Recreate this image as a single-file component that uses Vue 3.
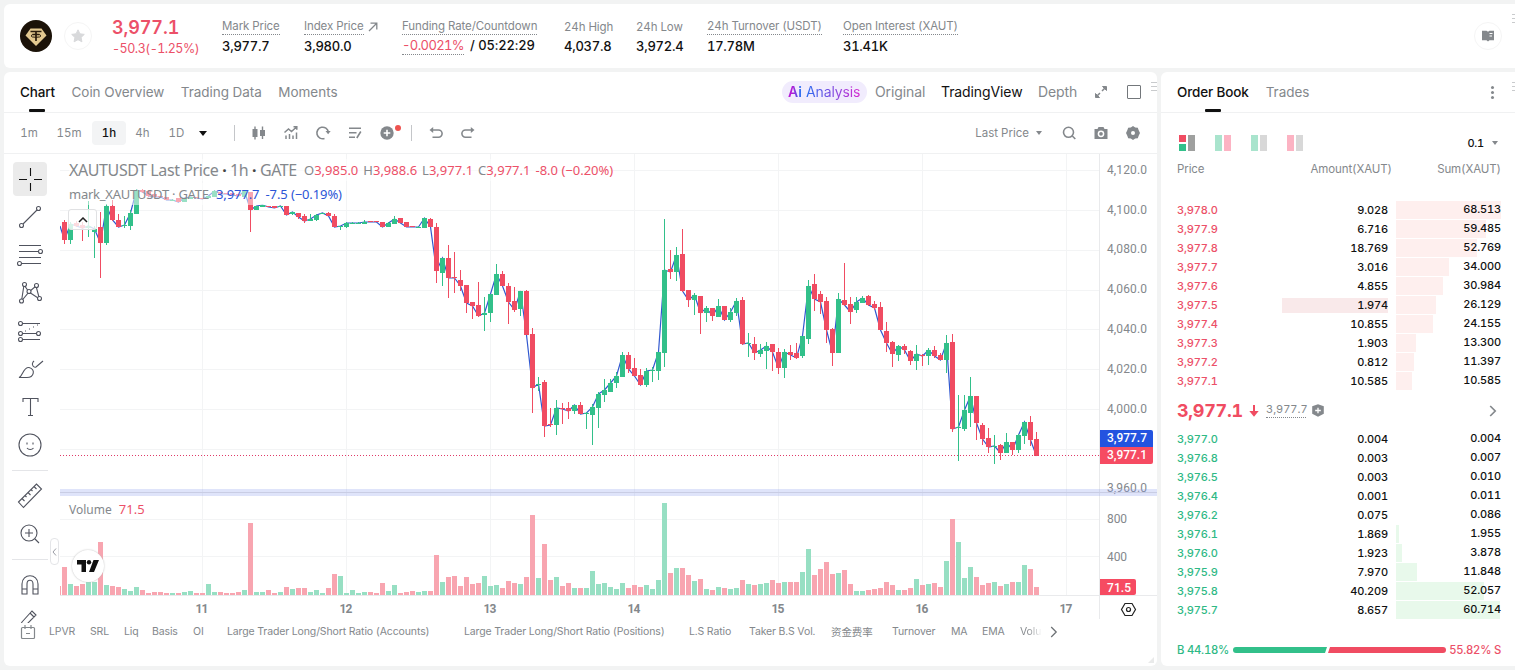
<template>
  <div class="page">
    <header class="ticker">
      <svg class="coin" viewBox="0 0 32 32">
        <circle cx="16" cy="16" r="16" fill="#1b1208" />
        <path d="M10.5 8.5h11l5 7L16 26 5.500 15.500z" fill="#e3c88f" />
        <path d="M10.500 11.500h11M16 11.500v9.500M12.500 14.500h7" stroke="#2a1c0c" stroke-width="1.700" fill="none" />
        <ellipse cx="16" cy="15.800" rx="5" ry="1.500" stroke="#2a1c0c" stroke-width="1" fill="none" />
      </svg>
      <div class="star">
        <svg width="14" height="14" viewBox="0 0 14 14">
          <path d="M7 .8l1.900 4 4.400.600-3.200 3 .8 4.400L7 10.700l-3.900 2.100.8-4.400-3.200-3 4.400-.600z" fill="#d8d9db" stroke="#d8d9db" stroke-linejoin="round" />
        </svg>
      </div>
      <div class="last">
        <div class="last-price">3,977.1</div>
        <div class="last-change">-50.3(-1.25%)</div>
      </div>
      <div class="stats">
        <div v-for="s in stats" :key="s.label" class="stat">
          <div class="stat-label">
            <span :class="{ dotted: s.dotted }">{{ s.label }}</span>
            <svg v-if="s.link" class="link" width="10" height="10" viewBox="0 0 10 10">
              <path d="M1 9L8.500 1.500M2.500 1.200h6.300v6.300" fill="none" stroke="#84888c" stroke-width="1.300" />
            </svg>
          </div>
          <div v-if="s.rate" class="stat-value funding">
            <span class="rate">{{ s.rate }}</span><span>{{ s.value }}</span>
          </div>
          <div v-else class="stat-value">{{ s.value }}</div>
        </div>
      </div>
      <div class="guide">
        <svg width="14" height="12" viewBox="0 0 14 12">
          <path d="M1 .8h4.500L7 1.800 8.500.8H13v9.500H8.500L7 11.600l-1.500-1.300H1z" fill="#84888c" />
          <path d="M8.500 3.500h3M8.500 6H11" stroke="#fff" stroke-width="1" />
        </svg>
      </div>
      <i class="grip grip-top" />
    </header>

    <main class="main">
      <section class="card chart-card">
        <nav class="tabs">
          <div class="tabs-left">
            <span class="tab on">Chart</span>
            <span class="tab">Coin Overview</span>
            <span class="tab">Trading Data</span>
            <span class="tab">Moments</span>
          </div>
          <div class="tabs-right">
            <span class="ai"><b>Ai</b><em>Analysis</em></span>
            <span class="tab original">Original</span>
            <span class="tab dark tv">TradingView</span>
            <span class="tab depth">Depth</span>
            <svg class="expand" width="14" height="14" viewBox="0 0 14 14">
              <path d="M8.500 1.500h4v4zM1.500 8.500v4h4z" fill="#84888c" stroke="#84888c" />
              <path d="M11.500 2.500L8 6M2.500 11.500L6 8" stroke="#84888c" stroke-width="1.500" />
            </svg>
            <i class="square" />
          </div>
          <i class="grip" />
        </nav>

        <div class="toolbar">
          <div class="tools">
            <span>1m</span>
            <span>15m</span>
            <span class="picked">1h</span>
            <span>4h</span>
            <span>1D</span>
            <span><i class="caret black" /></span>
            <span class="bar first"><i /></span>
            <span>
              <svg width="16" height="16" viewBox="0 0 16 16" fill="#84888c">
                <path d="M1.500 4h5v8h-5zM3.300 1.500h1.400v13H3.300zM9 5h5v6H9zM10.800 1.500h1.400v12.500h-1.400z" />
              </svg>
            </span>
            <span>
              <svg width="16" height="16" viewBox="0 0 16 16" fill="none" stroke="#84888c" stroke-width="1.500">
                <path d="M1.500 7.500L5.500 4l3 2.500L13.500 2M10.500 1.800h3.300v3M3 14v-3.500M6.500 14V9M10 14v-3.500M13.500 14V7.500" />
              </svg>
            </span>
            <span>
              <svg width="16" height="16" viewBox="0 0 16 16" fill="none" stroke="#84888c" stroke-width="1.600">
                <path d="M9.500 13.500A5.800 5.800 0 1 1 13.400 7" />
                <path d="M10.500 6h5.200l-2.600 3.200z" fill="#84888c" stroke="none" />
              </svg>
            </span>
            <span>
              <svg width="16" height="16" viewBox="0 0 16 16" fill="none" stroke="#84888c" stroke-width="1.600">
                <path d="M2 3.200h12M2 7.700h7.500M2 12.200h6M13.800 6.500L9.800 13" />
              </svg>
            </span>
            <span class="plus">
              <svg width="16" height="16" viewBox="0 0 16 16">
                <circle cx="8" cy="8" r="6.700" fill="#84888c" />
                <path d="M8 4.700v6.600M4.700 8h6.600" stroke="#fff" stroke-width="1.600" />
              </svg>
              <i class="dot" />
            </span>
            <span class="bar"><i /></span>
            <span>
              <svg width="16" height="16" viewBox="0 0 16 16" fill="none" stroke="#84888c" stroke-width="1.600">
                <path d="M4.500 5h6a3.200 3.200 0 0 1 0 7.200H4.500" />
                <path d="M1.500 5l3.700-3v6z" fill="#84888c" stroke="none" />
              </svg>
            </span>
            <span>
              <svg width="16" height="16" viewBox="0 0 16 16" fill="none" stroke="#84888c" stroke-width="1.600">
                <path d="M11.500 5h-6a3.200 3.200 0 0 0 0 7.200h6" />
                <path d="M14.500 5l-3.700-3v6z" fill="#84888c" stroke="none" />
              </svg>
            </span>
          </div>
          <div class="tools-right">
            <span class="source">Last Price</span>
            <i class="caret" />
            <svg width="16" height="16" viewBox="0 0 16 16" fill="none" stroke="#84888c" stroke-width="1.600">
              <circle cx="7.500" cy="7.300" r="5" /><path d="M11.300 11l3 3" />
            </svg>
            <svg width="16" height="16" viewBox="0 0 16 16">
              <path d="M1.500 4h3l1-2h5l1 2h3v10h-13z" fill="#84888c" />
              <circle cx="8" cy="8.800" r="2.600" fill="#84888c" stroke="#fff" stroke-width="1.500" />
            </svg>
            <svg width="16" height="16" viewBox="0 0 16 16">
              <path d="M8 1l2.200 1.500 2.600.2.900 2.500L15 8l-1.300 2.800-.9 2.500-2.600.2L8 15l-2.200-1.500-2.600-.2-.9-2.500L1 8l1.300-2.800.9-2.500 2.600-.2z" fill="#84888c" />
              <circle cx="8" cy="8" r="2" fill="#fff" />
            </svg>
          </div>
        </div>

        <div class="workspace">
          <aside class="draw">
            <span v-for="(d, i) in drawTools" :key="i" class="draw-tool" :class="{ selected: i === 0, rule: d.rule }">
              <svg width="34" height="34" viewBox="-17 -17 34 34" fill="none" :stroke="i === 0 ? '#111' : '#50535e'" stroke-width="1.100">
                <path :d="d.path" />
                <circle v-for="(c, n) in d.dots" :key="n" :cx="c[0]" :cy="c[1]" r="2" fill="#fff" />
              </svg>
            </span>
          </aside>

          <div class="plot">
            <svg class="chart" width="1097" height="469" viewBox="60 154 1097 469">
              <g stroke="#f3f4f5">
                <line v-for="y in gridY" :key="y" x1="60" x2="1099" :y1="y" :y2="y" />
                <line v-for="d in days" :key="d.x" :x1="d.x" :x2="d.x" y1="154" y2="595" />
              </g>
              <polyline :points="markLine" fill="none" stroke="#3158cf" stroke-width="1.200" />
              <g v-for="(c, i) in bars" :key="i" :fill="c.up ? '#32c08a' : '#f04c62'">
                <rect :x="c.x + 2" :y="c.high" width="1" :height="c.low - c.high" />
                <rect :x="c.x" :y="c.top" width="5" :height="Math.max(1, c.bottom - c.top)" />
                <rect :x="c.x" :y="595 - c.volume" width="5" :height="c.volume" :fill="c.up ? '#97dfc3' : '#f8a5b0'" />
              </g>
              <rect x="60" y="586" width="1" height="9" fill="#f8a5b0" />
              <line x1="60" x2="1099" y1="455.500" y2="455.500" stroke="#e03a68" stroke-dasharray="1 2" />
              <path d="M1099.500 154v465M60 595.500h1097" stroke="#e9eaec" />
              <g class="axis">
                <text v-for="p in prices" :key="p.y" x="1107" :y="p.y" :textLength="p.w">{{ p.text }}</text>
              </g>
              <rect x="60" y="489" width="1097" height="7" fill="#8c9eec" opacity=".28" />
              <line x1="60" x2="1157" y1="492.500" y2="492.500" stroke="#c9cde4" />
              <g class="axis flags">
                <path d="M1100 430h51a2 2 0 0 1 2 2v15h-53z" fill="#2353e0" />
                <path d="M1100 447h53v15a2 2 0 0 1-2 2h-51z" fill="#f64b62" />
                <path d="M1100 579h34a2 2 0 0 1 2 2v12a2 2 0 0 1-2 2h-34z" fill="#f64b62" />
                <text x="1107" y="442" textLength="40">3,977.7</text>
                <text x="1107" y="459.300" textLength="40">3,977.1</text>
                <text x="1107" y="592" textLength="24">71.5</text>
              </g>
              <g class="axis dates">
                <text v-for="d in days" :key="d.x" :x="d.x - 0.5" y="613" textLength="13">{{ d.text }}</text>
              </g>
              <path d="M1125 603.500h7l3.500 6-3.500 6h-7l-3.500-6z" fill="none" stroke="#222" stroke-width="1.200" />
              <circle cx="1128.500" cy="609.500" r="2" fill="none" stroke="#222" stroke-width="1.200" />
            </svg>

            <div class="legend">
              <div class="legend-title">
                <span class="pair">XAUTUSDT Last Price <b>·</b> 1h <b>·</b> GATE</span>
                <span class="ohlc"><span>O<em>3,985.0</em></span><span>H<em>3,988.6</em></span><span>L<em>3,977.1</em></span><span>C<em>3,977.1</em></span><em>-8.0 (−0.20%)</em></span>
              </div>
              <div class="legend-mark">
                <span class="mark">mark_XAUTUSDT · GATE</span>
                <span class="blue">3,977.7</span><span class="blue">-7.5 (−0.19%)</span>
              </div>
            </div>
            <div class="fold">
              <svg width="10" height="6" viewBox="0 0 10 6"><path d="M1 5l4-4 4 4" fill="none" stroke="#222" stroke-width="1.500" /></svg>
            </div>
            <div class="volume-legend">Volume <em>71.5</em></div>
            <div class="tv-logo">
              <svg width="22" height="12" viewBox="0 0 22 12" fill="#111">
                <path d="M0 0h9v12H4.500V4.500H0zM16.500 0H22l-5 12h-5z" /><circle cx="12" cy="2.300" r="2.200" />
              </svg>
            </div>
            <div class="collapse">
              <svg width="5" height="8" viewBox="0 0 5 8"><path d="M4 .5L1 4l3 3.500" fill="none" stroke="#9a9da5" /></svg>
            </div>
          </div>
        </div>

        <div class="indicators">
          <svg class="calendar" width="16" height="16" viewBox="0 0 16 16" fill="none" stroke="#84888c" stroke-width="1.200">
            <rect x="1.500" y="3.500" width="13" height="11" rx="1" /><path d="M5 1v4M11 1v4M6 9.500h4" />
          </svg>
          <span v-for="n in indicators" :key="n">{{ n }}</span>
          <span class="fade">Volu</span>
          <svg class="more" width="8" height="12" viewBox="0 0 8 12"><path d="M1.200 1l5 5-5 5" fill="none" stroke="#6f7377" stroke-width="1.300" /></svg>
        </div>
        <i class="resize" />
      </section>

      <section class="card book-card">
        <nav class="tabs">
          <div class="tabs-left">
            <span class="tab on">Order Book</span>
            <span class="tab trades">Trades</span>
          </div>
          <div class="kebab"><i /><i /><i /></div>
          <i class="grip" />
        </nav>

        <div class="modes">
          <span class="mode active"><i class="two" /><i class="gray" /></span>
          <span class="mode"><i class="green" /><i class="red" /></span>
          <span class="mode"><i class="green" /><i class="gray" /></span>
          <span class="mode"><i class="red" /><i class="gray" /></span>
          <span class="step">0.1</span>
          <i class="caret" />
        </div>

        <div class="book-head">
          <span>Price</span><span>Amount(XAUT)</span><span>Sum(XAUT)</span>
        </div>

        <div class="rows asks">
          <div v-for="r in asks" :key="r[0]" class="row">
            <span class="price">{{ r[0] }}</span>
            <span class="amount"><u :class="{ flash: r[0] === '3,977.5' }">{{ r[1] }}</u></span>
            <span class="sum"><i :style="{ width: r[3] + 'px' }" /><u>{{ r[2] }}</u></span>
          </div>
        </div>

        <div class="mid">
          <span class="mid-price">3,977.1</span>
          <svg width="10" height="12" viewBox="0 0 10 12"><path d="M5 0v8" stroke="#f04c62" stroke-width="2" /><path d="M.3 6h9.400L5 11.700z" fill="#f04c62" /></svg>
          <span class="mid-mark">3,977.7</span>
          <svg class="shield" width="12" height="13" viewBox="0 0 12 13"><path d="M6 .3l5.800 2v7.500L6 12.700.200 9.800V2.300z" fill="#84888c" /><path d="M6 3.700v5.600M3.200 6.500h5.600" stroke="#fff" stroke-width="1.300" /></svg>
          <svg class="go" width="8" height="12" viewBox="0 0 8 12"><path d="M1.200 1l5 5-5 5" fill="none" stroke="#84888c" stroke-width="1.700" /></svg>
        </div>

        <div class="rows bids">
          <div v-for="r in bids" :key="r[0]" class="row">
            <span class="price">{{ r[0] }}</span>
            <span class="amount"><u>{{ r[1] }}</u></span>
            <span class="sum"><i :style="{ width: r[3] + 'px' }" /><u>{{ r[2] }}</u></span>
          </div>
        </div>

        <div class="ratio">
          <span class="buy">B 44.18%</span>
          <i class="buy-bar" /><i class="sell-bar" />
          <span class="sell">55.82% S</span>
        </div>
      </section>
    </main>
  </div>
</template>

<script setup>
import { computed } from 'vue'

const stats = [
  { label: 'Mark Price', value: '3,977.7', dotted: true },
  { label: 'Index Price', value: '3,980.0', dotted: true, link: true },
  { label: 'Funding Rate/Countdown', rate: '-0.0021%', value: '/ 05:22:29', dotted: true },
  { label: '24h High', value: '4,037.8' },
  { label: '24h Low', value: '3,972.4' },
  { label: '24h Turnover (USDT)', value: '17.78M', dotted: true },
  { label: 'Open Interest (XAUT)', value: '31.41K', dotted: true }
]

const drawTools = [
  { path: 'M.5-11v8M.5 4v8M-11 .5h8M4 .5h8' },
  { path: 'M-7 7L7-7', dots: [[-8.500, 8.500], [8.500, -8.500]] },
  { path: 'M-11-9.500h22M-11-3.500H9M-11 2.500h22M-9 8.500h20', dots: [[10.500, -3.500], [-10.500, 8.500]] },
  { path: 'M-8.500 8L-6-8L-1-1L6-7L9.500 6L-1-1L-8.500 8', dots: [[-8.500, 8], [-5.500, -8.500], [-1, -1.500], [6.500, -7.500], [9.500, 5.500]] },
  { path: 'M-8-7.500H10M-8 2.500H7M-8 8.500H10M-5 0h1M-1-2h1M3-4h1M7-6h1', dots: [[-9.500, -7.500], [-9.500, 2.500], [8.500, 2.500], [-9.500, 8.500]] },
  { path: 'M-11 8.500C-7 7-7-2-1-1.500C6 0 4 8.500-3 8.500zM13-8L6-2C4-1 1-4 3-7l1-1' },
  { path: 'M-7-5v-3.500H8V-5M.5-8.500v17M-2 8.500h5' },
  { path: 'M11 0A11 11 0 1 1-11 0A11 11 0 1 1 11 0M-3-2.500v2M3-2.500v2M-3 3c1.500 2 5 2 6.500 0' },
  { path: 'M-11.500 6L6.500-12L11.500-7L-6.500 11.500zM-8 2.500l2.500 2.500M-5-.5l1.500 1.500M-2-3.500l2.500 2.500M1-6.500l1.500 1.500M4-9.500l2.500 2.500', rule: true },
  { path: 'M7-1A8 8 0 1 1-9-1A8 8 0 1 1 7-1M5 5l4 4M-1-5v8M-5-1h8' },
  { path: 'M-8 9V-1C-8-12 8-12 8-1V9H3V-1c0-5-6-5-6 0V9zM-8 4h5M3 4h5', rule: true },
  { path: 'M-8-1L2-12l4 4L-3 1h-6zM0-10l4 4M0 1h9' }
]

const indicators = [
  'LPVR', 'SRL', 'Liq', 'Basis', 'OI',
  'Large Trader Long/Short Ratio (Accounts)',
  'Large Trader Long/Short Ratio (Positions)',
  'L.S Ratio', 'Taker B.S Vol.', '资金费率', 'Turnover', 'MA', 'EMA'
]

const gridY = [170.5, 210.5, 250.5, 290.5, 329.5, 369.5, 409.5, 449.5, 519.5, 556.5]
const days = ['11', '12', '13', '14', '15', '16', '17'].map((text, i) => ({ text, x: 202.5 + i * 144 }))
const prices = [
  ['4,120.0', 174], ['4,100.0', 214], ['4,080.0', 253], ['4,060.0', 293], ['4,040.0', 333],
  ['4,020.0', 373], ['4,000.0', 413], ['3,960.0', 492], ['800', 523], ['400', 561]
].map(([text, y]) => ({ text, y, w: text.length > 3 ? 40 : 20 }))

// up, high, body top, body bottom, low, volume bar height
const candles = [
  [0, 220, 222, 240, 244, 28], [1, 222, 224, 240, 244, 11], [0, 221, 223, 226, 227, 9], [0, 222, 225, 228, 241, 11],
  [1, 201, 226, 228, 237, 13], [1, 226, 229, 232, 258, 13], [0, 212, 227, 243, 278, 53], [1, 204, 206, 243, 245, 10],
  [0, 200, 206, 220, 221, 9], [0, 214, 220, 227, 227, 8], [1, 216, 225, 226, 228, 6], [1, 210, 213, 226, 230, 4],
  [1, 189, 190, 214, 214, 8], [0, 189, 190, 192, 193, 5], [0, 190, 191, 196, 197, 2], [0, 193, 194, 197, 197, 3],
  [0, 196, 196, 197, 197, 3], [0, 197, 197, 200, 200, 2], [1, 199, 200, 201, 201, 2], [0, 198, 198, 202, 202, 2],
  [1, 198, 198, 202, 202, 3], [1, 197, 197, 199, 199, 4], [0, 197, 197, 198, 198, 2], [0, 198, 198, 199, 199, 2],
  [1, 196, 196, 198, 199, 11], [1, 190, 191, 197, 197, 3], [0, 192, 192, 194, 194, 3], [0, 193, 193, 194, 194, 2],
  [0, 193, 193, 195, 195, 2], [0, 194, 194, 196, 196, 3], [1, 191, 191, 197, 197, 5], [0, 192, 192, 210, 232, 72],
  [1, 206, 206, 210, 210, 3], [1, 205, 205, 207, 207, 3], [0, 206, 206, 207, 207, 5], [0, 206, 206, 208, 208, 2],
  [1, 206, 206, 207, 207, 3], [0, 206, 206, 215, 215, 8], [1, 212, 212, 214, 215, 6], [0, 213, 213, 217, 219, 7],
  [0, 214, 216, 221, 223, 7], [1, 214, 219, 221, 221, 3], [1, 214, 215, 220, 221, 5], [1, 213, 213, 214, 214, 2],
  [0, 212, 213, 216, 216, 7], [0, 214, 216, 227, 227, 21], [1, 226, 226, 227, 230, 19], [1, 222, 223, 227, 228, 2],
  [1, 222, 223, 224, 224, 5], [1, 222, 223, 223, 223, 2], [1, 220, 222, 224, 224, 3], [0, 221, 221, 222, 222, 3],
  [0, 221, 221, 222, 222, 2], [0, 222, 222, 227, 227, 12], [1, 222, 223, 227, 227, 4], [1, 216, 219, 224, 224, 10],
  [0, 218, 218, 223, 223, 2], [0, 222, 222, 227, 227, 3], [0, 226, 226, 227, 227, 4], [1, 226, 227, 228, 228, 3],
  [1, 218, 218, 228, 228, 4], [0, 218, 219, 227, 227, 4], [0, 223, 227, 271, 283, 40], [1, 258, 258, 273, 286, 13],
  [0, 245, 258, 278, 298, 18], [0, 252, 277, 278, 293, 19], [0, 270, 280, 286, 291, 9], [0, 285, 285, 303, 313, 18],
  [0, 302, 302, 306, 319, 11], [0, 282, 305, 316, 317, 12], [1, 297, 313, 315, 331, 19], [1, 294, 294, 313, 322, 9],
  [1, 264, 274, 295, 295, 10], [0, 271, 274, 286, 286, 7], [0, 283, 286, 302, 324, 14], [0, 287, 301, 310, 312, 12],
  [1, 291, 291, 309, 316, 11], [0, 290, 291, 335, 335, 18], [0, 328, 334, 388, 413, 80], [1, 377, 384, 385, 391, 17],
  [0, 380, 382, 426, 437, 51], [0, 408, 424, 425, 427, 15], [1, 400, 408, 425, 435, 18], [0, 403, 408, 409, 424, 9],
  [0, 402, 408, 411, 419, 12], [1, 405, 405, 411, 414, 7], [0, 402, 405, 414, 414, 7], [1, 412, 413, 414, 429, 7],
  [1, 404, 407, 415, 445, 24], [1, 392, 394, 408, 428, 11], [1, 379, 390, 395, 402, 12], [1, 379, 383, 392, 392, 8],
  [1, 372, 376, 383, 388, 6], [1, 352, 355, 377, 377, 12], [0, 352, 355, 369, 373, 7], [0, 358, 368, 376, 376, 10],
  [0, 369, 375, 385, 385, 8], [1, 368, 371, 385, 387, 10], [1, 367, 370, 371, 382, 6], [1, 352, 352, 371, 380, 15],
  [1, 219, 270, 353, 367, 92], [0, 250, 269, 272, 279, 22], [1, 247, 255, 272, 281, 27], [0, 229, 254, 291, 292, 27],
  [0, 290, 290, 300, 307, 20], [1, 293, 295, 300, 315, 14], [0, 296, 296, 313, 334, 16], [1, 306, 308, 313, 322, 6],
  [0, 308, 308, 316, 321, 5], [1, 299, 306, 317, 317, 8], [0, 306, 306, 320, 320, 7], [1, 308, 312, 320, 322, 6],
  [1, 298, 301, 313, 316, 7], [0, 297, 300, 344, 345, 15], [1, 333, 343, 344, 357, 11], [0, 337, 344, 353, 360, 10],
  [1, 344, 350, 354, 357, 11], [1, 342, 346, 351, 369, 12], [0, 344, 344, 352, 371, 15], [0, 348, 352, 368, 374, 12],
  [1, 349, 352, 368, 378, 13], [0, 345, 352, 355, 360, 13], [0, 343, 353, 358, 359, 13], [1, 336, 336, 356, 358, 23],
  [1, 280, 286, 339, 344, 46], [0, 274, 284, 299, 311, 20], [0, 291, 294, 302, 314, 26], [0, 297, 301, 330, 343, 33],
  [0, 328, 329, 353, 366, 21], [1, 293, 299, 353, 353, 22], [0, 263, 300, 305, 306, 25], [0, 297, 304, 312, 324, 11],
  [1, 297, 302, 310, 313, 4], [1, 296, 298, 303, 303, 4], [0, 295, 296, 305, 306, 5], [0, 301, 304, 308, 310, 6],
  [0, 302, 307, 330, 330, 7], [0, 322, 331, 343, 352, 13], [0, 341, 342, 354, 367, 10], [1, 345, 346, 355, 361, 5],
  [0, 344, 346, 350, 354, 5], [0, 350, 351, 361, 365, 7], [1, 345, 354, 361, 370, 16], [0, 354, 355, 356, 366, 10],
  [1, 348, 350, 356, 365, 11], [0, 346, 350, 356, 358, 12], [0, 353, 355, 360, 360, 8], [1, 335, 343, 360, 373, 34],
  [0, 334, 342, 429, 432, 76], [1, 395, 427, 428, 461, 53], [1, 395, 410, 429, 431, 17], [1, 377, 396, 413, 427, 28],
  [0, 396, 396, 423, 440, 18], [0, 423, 425, 439, 445, 10], [0, 428, 438, 447, 453, 12], [1, 435, 446, 447, 464, 13],
  [0, 444, 445, 453, 460, 9], [1, 433, 442, 453, 453, 11], [0, 442, 442, 450, 455, 13], [1, 434, 435, 450, 453, 13],
  [1, 422, 422, 436, 444, 30], [0, 416, 422, 440, 446, 26], [0, 432, 439, 456, 456, 8]
]

const bars = candles.map(([up, high, top, bottom, low, volume], i) => ({ up, high, top, bottom, low, volume, x: 62 + i * 6 }))
const markLine = computed(() => '60,226 ' + bars.map(c => `${c.x + 2.5},${c.up ? c.top : c.bottom}`).join(' '))

// price, amount, running sum, depth bar width
const asks = [
  ['3,978.0', '9.028', '68.513', 105], ['3,977.9', '6.716', '59.485', 90], ['3,977.8', '18.769', '52.769', 81],
  ['3,977.7', '3.016', '34.000', 53], ['3,977.6', '4.855', '30.984', 47], ['3,977.5', '1.974', '26.129', 40],
  ['3,977.4', '10.855', '24.155', 37], ['3,977.3', '1.903', '13.300', 20], ['3,977.2', '0.812', '11.397', 18],
  ['3,977.1', '10.585', '10.585', 16]
]
const bids = [
  ['3,977.0', '0.004', '0.004', 0], ['3,976.8', '0.003', '0.007', 0], ['3,976.5', '0.003', '0.010', 0],
  ['3,976.4', '0.001', '0.011', 0], ['3,976.2', '0.075', '0.086', 0], ['3,976.1', '1.869', '1.955', 3],
  ['3,976.0', '1.923', '3.878', 6], ['3,975.9', '7.970', '11.848', 21], ['3,975.8', '40.209', '52.057', 88],
  ['3,975.7', '8.657', '60.714', 104]
]
</script>

<style>
body {
  background: #f2f3f3;
  overflow: hidden;
}
</style>

<style scoped>
.page {
  width: 1515px;
  height: 670px;
  overflow: hidden;
  box-sizing: border-box;
  padding: 4px 0 4px 4px;
  font-family: Inter, 'Noto Sans CJK SC', sans-serif;
  font-variant-numeric: tabular-nums;
  color: #111;
  background: #f2f3f3;
}
.page svg {
  display: block;
  flex: none;
}

.ticker {
  position: relative;
  height: 64px;
  display: flex;
  align-items: center;
  background: #fff;
  border-radius: 6px 0 0 6px;
}
.coin {
  width: 32px;
  height: 32px;
  margin-left: 16px;
}
.star,
.guide {
  width: 26px;
  height: 26px;
  border: 1px solid #f5f5f5;
  border-radius: 50%;
  display: flex;
  align-items: center;
  justify-content: center;
}
.star {
  margin-left: 12px;
}
.guide {
  margin-left: auto;
  margin-right: 13px;
}
.last {
  width: 110px;
  margin-left: 20px;
  margin-top: 4px;
  color: #ec5068;
}
.last-price {
  font-size: 18px;
  font-weight: 600;
  letter-spacing: -0.1px;
  line-height: 22px;
}
.last-change {
  font-size: 12.5px;
  letter-spacing: -0.5px;
  line-height: 20px;
}
.stats {
  display: grid;
  grid-template-columns: 82px 98px 162px 72px 71px 136px 130px;
  margin-top: -1px;
}
.stat-label {
  display: flex;
  align-items: center;
  gap: 4px;
  height: 20px;
  font-size: 11.5px;
  letter-spacing: -0.1px;
  line-height: 16px;
  color: #84888c;
  white-space: nowrap;
}
.dotted {
  border-bottom: 1px dotted #84888c;
}
.stat-value {
  font-size: 13px;
  font-weight: 500;
  letter-spacing: -0.25px;
  line-height: 18px;
}
.funding {
  display: flex;
  gap: 6px;
  line-height: 17px;
  letter-spacing: -0.6px;
}
.rate {
  color: #ec5068;
  font-weight: 400;
  border-bottom: 1px dotted #84888c;
}
.rate + span {
  letter-spacing: -0.1px;
}
.grip {
  position: absolute;
  right: 0;
  top: 10px;
  width: 6px;
  height: 10px;
  background: repeating-linear-gradient(#c9cbcd 0 1px, #fff 1px 4px);
}
.grip-top {
  width: 3px;
}

.main {
  display: flex;
  gap: 4px;
  height: 594px;
  margin-top: 4px;
}
.card {
  position: relative;
  background: #fff;
  border-radius: 6px;
  overflow: hidden;
}
.chart-card {
  width: 1153px;
}
.book-card {
  width: 354px;
  border-radius: 6px 0 0 6px;
}
.resize {
  position: absolute;
  right: 3px;
  bottom: 3px;
  border: 3px solid transparent;
  border-right-color: #e9eaea;
  border-bottom-color: #e9eaea;
}
.tabs {
  position: relative;
  height: 40px;
  display: flex;
  align-items: center;
  justify-content: space-between;
  border-bottom: 1px solid #f0f1f2;
  padding-left: 16px;
  font-size: 14px;
  color: #84888c;
}
.tabs-left,
.tabs-right {
  display: flex;
  align-items: center;
  white-space: nowrap;
}
.tabs-left {
  gap: 16.5px;
  font-size: 13.5px;
}
.tab {
  position: relative;
  line-height: 40px;
  letter-spacing: -0.1px;
}
.tabs-left .tab {
  letter-spacing: -0.03px;
}
.on,
.dark {
  color: #111;
}
.on {
  font-weight: 500;
}
.tabs-left .on {
  letter-spacing: -0.15px;
}
.on::after {
  content: '';
  position: absolute;
  left: 50%;
  bottom: 0;
  width: 16px;
  height: 3px;
  margin-left: -8px;
  border-radius: 1px;
  background: #111;
}
.tabs-right {
  margin-right: 16px;
}
.ai {
  display: flex;
  gap: 4px;
  width: 73px;
  padding: 0 6px;
  border-radius: 11px;
  background: #f1ecfd;
  line-height: 22px;
  margin-right: 8px;
}
.ai b,
.ai em {
  font-style: normal;
  color: transparent;
  background: linear-gradient(90deg, #b51bd6 30%, #2b6cf0 90%);
  -webkit-background-clip: text;
  background-clip: text;
}
.ai b {
  font-weight: 600;
}
.ai em {
  letter-spacing: -0.1px;
  background-image: linear-gradient(90deg, #2b6cf0, #d62bd0);
}
.original {
  width: 66px;
}
.tv {
  width: 97px;
}
.depth {
  width: 56px;
}
.square {
  width: 12px;
  height: 12px;
  border: 1px solid #73777b;
  border-radius: 1px;
  margin-left: 19px;
}

.toolbar {
  height: 40px;
  display: flex;
  justify-content: space-between;
  align-items: center;
  border-bottom: 1px solid #f0f1f2;
  padding: 0 16px 0 8px;
  font-size: 11.5px;
  color: #84888c;
}
.tools {
  display: grid;
  grid-template-columns: 34px 46px 34px 33px 35px 18px 31px repeat(5, 32px) 17px 32px 32px;
  height: 24px;
}
.tools > span {
  display: flex;
  align-items: center;
  justify-content: center;
}
.tools .picked {
  background: #f3f4f5;
  border-radius: 4px;
  color: #111;
  font-weight: 500;
}
.tools .first {
  justify-content: flex-end;
  padding-right: 8px;
}
.bar i {
  width: 1px;
  height: 16px;
  background: #c4c6c9;
}
.plus {
  position: relative;
}
.dot {
  position: absolute;
  right: 2px;
  top: 4px;
  width: 6px;
  height: 6px;
  border-radius: 50%;
  background: #ee5350;
}
.caret {
  border: 3px solid transparent;
  border-top: 4px solid #84888c;
  border-bottom: 0;
}
.caret.black {
  border-width: 5px 4.5px 0;
  border-top-color: #111;
}
.tools-right {
  display: flex;
  align-items: center;
}
.tools-right svg {
  margin-left: 16px;
}
.tools-right .caret {
  margin: 0 3px 0 7px;
}

.workspace {
  display: flex;
  height: 469px;
}
.draw {
  width: 56px;
  height: 463px;
  padding-top: 6px;
  overflow: hidden;
}
.draw-tool {
  display: flex;
  align-items: center;
  justify-content: center;
  height: 38px;
  width: 36px;
  margin-left: 8px;
}
.draw-tool.selected svg {
  background: #ebebeb;
  border-radius: 4px;
}
.draw-tool.rule {
  border-top: 1px solid #e4e5e8;
  margin-top: 6px;
  padding-top: 6px;
}
.plot {
  position: relative;
  width: 1097px;
}
.axis {
  font-family: Roboto, sans-serif;
  font-size: 12px;
  fill: #84888c;
}
.flags text {
  fill: #fff;
  font-weight: 500;
}
.dates {
  font-weight: 700;
  text-anchor: middle;
}
.legend {
  position: absolute;
  left: 9px;
  top: 5px;
  font-family: 'Noto Sans', sans-serif;
  white-space: nowrap;
}
.legend-title {
  display: flex;
  align-items: center;
  height: 22px;
  color: #84888c;
  background: rgba(255, 255, 255, 0.5);
}
.pair {
  width: 235px;
  font-size: 16px;
  letter-spacing: -0.4px;
}
.pair b {
  color: #444;
}
.ohlc {
  display: flex;
  gap: 5px;
}
.ohlc,
.mark,
.blue {
  font-size: 13px;
}
.legend em {
  font-style: normal;
  color: #ec5068;
}
.legend-mark {
  width: 275px;
  height: 22px;
  margin-top: 2px;
  display: flex;
  align-items: center;
  color: #84888c;
  background: rgba(255, 255, 255, 0.5);
}
.mark {
  flex: none;
  width: 147px;
  letter-spacing: -0.25px;
}
.blue {
  color: #2c55d6;
  margin-right: 6px;
  letter-spacing: -0.1px;
}
.fold {
  position: absolute;
  left: 8px;
  top: 55px;
  width: 27px;
  height: 19px;
  border: 1px solid #e0e1e3;
  border-radius: 3px;
  background: rgba(255, 255, 255, 0.8);
  display: flex;
  align-items: center;
  justify-content: center;
}
.volume-legend {
  position: absolute;
  left: 9px;
  top: 345px;
  font: 12px/20px 'Noto Sans', sans-serif;
  color: #84888c;
}
.volume-legend em {
  font-size: 13px;
  font-style: normal;
  color: #ec5068;
  margin-left: 4px;
}
.tv-logo {
  position: absolute;
  left: 12px;
  top: 396px;
  width: 32px;
  height: 32px;
  border-radius: 50%;
  background: #fff;
  box-shadow: 0 0 2px #bbb;
  display: flex;
  align-items: center;
  justify-content: center;
}
.collapse {
  position: absolute;
  left: -10px;
  top: 384px;
  width: 7px;
  height: 25px;
  border: 1px solid #e4e5e8;
  border-radius: 4px;
  background: #fff;
  display: flex;
  align-items: center;
  justify-content: center;
}
.indicators {
  display: grid;
  grid-template-columns: 29px 41px 34px 28px 41px 34px 237px 225px 60px 82px 61px 59px 31px 38px 22px 8px;
  align-items: center;
  padding-left: 16px;
  height: 17px;
  font-size: 10.5px;
  letter-spacing: -0.12px;
  color: #84888c;
  white-space: nowrap;
}
.fade {
  color: transparent;
  background: linear-gradient(90deg, #84888c 40%, #fff);
  -webkit-background-clip: text;
  background-clip: text;
}
.more {
  margin-left: 8px;
}

.book-card .tabs-left {
  gap: 17px;
}
.kebab {
  display: flex;
  flex-direction: column;
  gap: 2px;
  margin-right: 21px;
}
.kebab i {
  width: 3px;
  height: 3px;
  border-radius: 50%;
  background: #84888c;
}
.book-card .grip {
  width: 3px;
}
.modes {
  display: flex;
  align-items: center;
  padding: 22px 17px 0 18px;
  height: 16px;
}
.mode {
  display: flex;
  gap: 2px;
  width: 36px;
}
.mode i {
  width: 7px;
  height: 16px;
  background: #d8d8d8;
}
.mode .green {
  background: #a9e4cd;
}
.mode .red {
  background: #fcb3c3;
}
.active .gray {
  background: #9fa09f;
}
.mode .two {
  background: linear-gradient(#f04c62 7px, #fff 7px 9px, #32c08a 9px);
}
.step {
  margin-left: auto;
  margin-right: 8px;
  font-size: 11px;
  font-weight: 500;
  letter-spacing: -0.2px;
}
.book-head {
  display: grid;
  grid-template-columns: 115px 100px 109px;
  padding: 8px 14px 0 16px;
  font-size: 11.5px;
  letter-spacing: -0.1px;
  line-height: 20px;
  color: #84888c;
}
.book-head span + span {
  text-align: right;
}
.rows {
  padding: 0 14px 0 16px;
  font-size: 11px;
  font-weight: 500;
  letter-spacing: -0.15px;
}
.asks {
  margin-top: 22px;
}
.row {
  display: grid;
  grid-template-columns: 105px 106px 8px 105px;
  height: 19px;
  line-height: 19px;
}
.row u {
  text-decoration: none;
}
.price {
  letter-spacing: -0.12px;
}
.asks .price {
  color: #ec5068;
}
.bids .price {
  color: #2fb985;
}
.amount {
  text-align: right;
}
.amount .flash {
  display: block;
  height: 15px;
  line-height: 15px;
  margin-top: 2px;
  background: #f9e9ea;
}
.sum {
  grid-column: 4;
  position: relative;
  text-align: right;
  line-height: 17px;
}
.sum i {
  position: absolute;
  left: 0;
  top: 0;
  height: 18px;
  background: #feefee;
}
.bids .sum i {
  background: #e8f9eb;
}
.sum u {
  position: relative;
}
.mid {
  display: flex;
  align-items: center;
  height: 39px;
  padding: 0 18px 0 16px;
}
.mid-price {
  width: 72px;
  font-size: 18px;
  font-weight: 700;
  letter-spacing: -0.3px;
  color: #f04c62;
}
.mid-mark {
  width: 40px;
  margin-left: 7px;
  font-size: 11px;
  line-height: 15px;
  margin-top: -2px;
  color: #84888c;
  border-bottom: 1px dotted #84888c;
}
.shield {
  margin-left: 6px;
}
.go {
  margin-left: auto;
}
.ratio {
  display: flex;
  align-items: center;
  padding: 0 14px 0 16px;
  height: 20px;
  margin-top: 20px;
  font-size: 11.3px;
  font-weight: 500;
  letter-spacing: -0.25px;
  white-space: nowrap;
}
.buy {
  width: 56px;
  color: #2fb985;
}
.sell {
  margin-left: auto;
  color: #ec5068;
}
.buy-bar,
.sell-bar {
  flex: none;
  height: 6px;
}
.buy-bar {
  width: 94px;
  background: #32c08a;
  border-radius: 3px 0 0 3px;
  clip-path: polygon(0 0, 100% 0, 92px 100%, 0 100%);
}
.sell-bar {
  width: 118px;
  margin-left: 1px;
  background: #f04c62;
  border-radius: 0 3px 3px 0;
  clip-path: polygon(2px 0, 100% 0, 100% 100%, 0 100%);
}
</style>
